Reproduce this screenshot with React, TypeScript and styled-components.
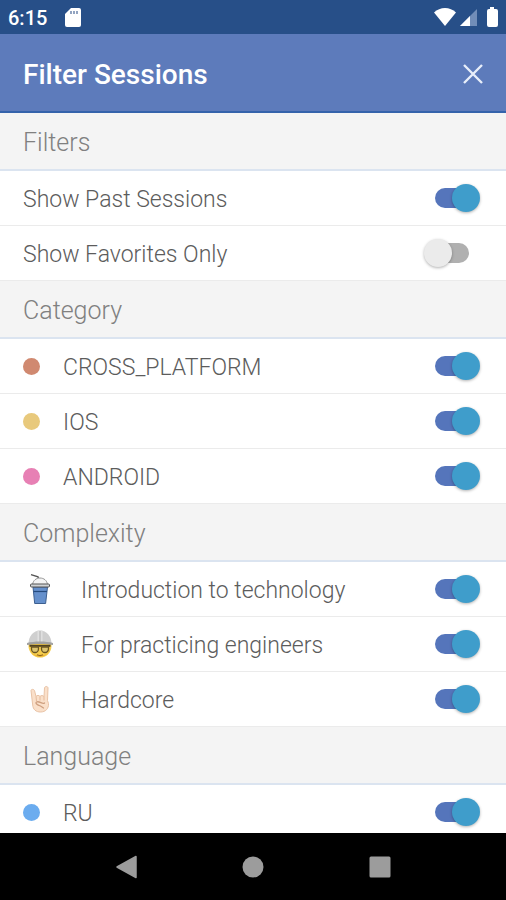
import React, { useState } from 'react';
import styled, { createGlobalStyle } from 'styled-components';

const GlobalStyle = createGlobalStyle`
  * { box-sizing: border-box; }
  html, body, #root { height: 100%; }
  body { margin: 0; background: #fff; font-family: Roboto, sans-serif; }
`;

const Screen = styled.div`
  display: flex;
  flex-direction: column;
  height: 100vh;
  overflow: hidden;
`;

const StatusBar = styled.div`
  display: flex;
  flex: none;
  align-items: center;
  justify-content: space-between;
  height: 34px;
  padding: 0 8px;
  background: #274f88;
  color: #fff;
`;

const StatusGroup = styled.div<{ $gap: number }>`
  display: flex;
  align-items: center;
  gap: ${({ $gap }) => $gap}px;
  svg { display: block; }
`;

const Clock = styled.time`
  font-size: 20px;
  font-weight: 500;
  line-height: 24px;
  padding-top: 2px;
`;

const TitleBar = styled.header`
  display: flex;
  flex: none;
  align-items: center;
  justify-content: space-between;
  height: 79px;
  padding: 2px 16px 0 23px;
  background: #5d7bbb;
  border-bottom: 2px solid #3563ab;
  color: #fff;
`;

const Title = styled.h1`
  margin: 0;
  padding-top: 2px;
  font-size: 28px;
  font-weight: 500;
  line-height: 32px;
`;

const CloseButton = styled.button`
  display: grid;
  place-items: center;
  width: 34px;
  height: 34px;
  padding: 0;
  border: 0;
  background: none;
  color: #e8eefa;
  cursor: pointer;
`;

const Content = styled.main`
  flex: 1;
  min-height: 0;
  overflow-y: auto;
  scrollbar-width: none;
`;

const SectionTitle = styled.h2`
  display: flex;
  align-items: center;
  height: 58px;
  margin: 0;
  padding: 4px 23px 0;
  background: #f4f4f4;
  border-bottom: 2px solid #dbe4f0;
  color: #808080;
  font-size: 25px;
  font-weight: 300;
  line-height: 32px;
`;

const List = styled.ul`
  margin: 0;
  padding: 0;
  list-style: none;
`;

const Row = styled.li`
  display: flex;
  height: 55px;
  border-bottom: 1px solid #ebebeb;
`;

const RowLabel = styled.label`
  display: flex;
  flex: 1;
  align-items: center;
  padding: 0 26px 0 23px;
  cursor: pointer;
`;

const RowText = styled.span`
  flex: 1;
  padding-top: 4px;
  color: #5c5c5c;
  font-size: 23px;
  font-weight: 300;
  line-height: 28px;
`;

const Dot = styled.span<{ $color: string }>`
  width: 17px;
  height: 17px;
  margin-right: 23px;
  border-radius: 50%;
  background: ${({ $color }) => $color};
`;

const Picture = styled.span`
  display: grid;
  place-items: center;
  width: 34px;
  margin-right: 24px;
`;

const Switch = styled.input`
  appearance: none;
  display: grid;
  align-items: center;
  width: 56px;
  height: 28px;
  margin: 0;
  cursor: pointer;

  &::before, &::after { content: ''; grid-area: 1 / 1; }
  &::before {
    justify-self: center;
    width: 34px;
    height: 20px;
    border-radius: 10px;
    background: #b0b0b0;
  }
  &::after {
    justify-self: start;
    width: 28px;
    height: 28px;
    border-radius: 50%;
    background: #ebebeb;
    box-shadow: 0 1px 3px rgba(0, 0, 0, 0.3);
  }
  &:checked::before { background: #5575bb; }
  &:checked::after { justify-self: end; background: #3f9dcb; }
`;

const NavBar = styled.nav`
  display: grid;
  flex: none;
  grid-template-columns: repeat(3, 25%);
  justify-content: center;
  height: 67px;
  background: #000;
`;

const NavButton = styled.button`
  display: grid;
  place-items: center;
  padding: 0;
  border: 0;
  background: none;
  color: #9c9c9c;
  cursor: pointer;
`;

const CupIcon = () => (
  <svg width="24" height="32" viewBox="0 0 24 32" fill="none" aria-hidden="true">
    <path d="M3 1.6l7 2.3 2.4 7" stroke="#555" strokeWidth="1.4" />
    <path d="M4.5 11.5c.6-4 3.6-6.5 7.500-6.500s7 2.500 7.500 6.500z" fill="#f4f4f4" stroke="#999" strokeWidth="1" />
    <path d="M5 14l1.700 16.500h10.900L19.500 14z" fill="#6590cc" stroke="#3c5f90" strokeWidth="1" />
    <path d="M5.500 18.500h13.500" stroke="#254b7d" strokeWidth="1.2" />
    <rect x="2.500" y="11" width="19" height="3" rx="1" fill="#cfd2d4" stroke="#555" strokeWidth="1" />
  </svg>
);

const EngineerIcon = () => (
  <svg width="26" height="30" viewBox="0 0 26 30" fill="none" aria-hidden="true">
    <circle cx="13" cy="17" r="11.500" fill="#f6cd4c" />
    <path d="M3 20c3 10 17 10 20 0-2 5-6 7-10 7s-8-2-10-7z" fill="#e5a92d" />
    <path d="M1.500 15C1.500 7 6.500 1.500 13 1.500S24.500 7 24.500 15z" fill="#cfcfcf" />
    <path d="M10.500 1.500h5V14h-5z" fill="#e0e0e0" />
    <path d="M13 2v12" stroke="#b0b0b0" strokeWidth="1" />
    <path d="M0 14c7-2 19-2 26 0v2c-7-1.500-19-1.500-26 0z" fill="#a2a2a2" />
    <path d="M2.500 16.800h21" stroke="#514322" strokeWidth="2" />
    <path d="M4.500 18h7v2a3.500 3.500 0 0 1-7 0zM14.500 18h7v2a3.500 3.500 0 0 1-7 0z" fill="#dcc46e" stroke="#6b5522" strokeWidth="1.300" />
    <path d="M10 25.800q3 1.500 6 0" stroke="#94651c" strokeWidth="1.200" />
  </svg>
);

const RockIcon = () => (
  <svg width="22" height="28" viewBox="0 0 22 28" fill="none" aria-hidden="true">
    <path
      d="M2 5.500c0-1.500 3-1.500 3.500 0l1.500 6c1-1.500 3-1.500 4 0 1-1.300 3-1.300 4 .2L15.500 3c.2-2 3.500-2 3.500 0l-.5 12.500 1 3c.5 5-3 8.500-8 8.500-4.500 0-7.500-2.500-7.800-7z"
      fill="#fae0ca"
      stroke="#e9c3a6"
      strokeWidth="1"
    />
    <path d="M7 11.500l.5 4.500M11 11.500v4M15 11.500v4" stroke="#e4bb9c" strokeWidth="1" />
    <path d="M15.500 18c-2 2-5-2.500-8-1-1.500 1 .5 3 4 4l3 2" stroke="#cfa080" strokeWidth="1.300" strokeLinecap="round" />
  </svg>
);

type Item = { label: string; on: boolean; color?: string; icon?: React.ReactNode };

const sections: { title: string; items: Item[] }[] = [
  {
    title: 'Filters',
    items: [
      { label: 'Show Past Sessions', on: true },
      { label: 'Show Favorites Only', on: false },
    ],
  },
  {
    title: 'Category',
    items: [
      { label: 'CROSS_PLATFORM', on: true, color: '#d08970' },
      { label: 'IOS', on: true, color: '#e8c97c' },
      { label: 'ANDROID', on: true, color: '#e780b4' },
    ],
  },
  {
    title: 'Complexity',
    items: [
      { label: 'Introduction to technology', on: true, icon: <CupIcon /> },
      { label: 'For practicing engineers', on: true, icon: <EngineerIcon /> },
      { label: 'Hardcore', on: true, icon: <RockIcon /> },
    ],
  },
  {
    title: 'Language',
    items: [{ label: 'RU', on: true, color: '#6bacef' }],
  },
];

function FilterRow({ item }: { item: Item }) {
  const [on, setOn] = useState(item.on);
  return (
    <Row>
      <RowLabel>
        {item.color && <Dot $color={item.color} />}
        {item.icon && <Picture>{item.icon}</Picture>}
        <RowText>{item.label}</RowText>
        <Switch type="checkbox" checked={on} onChange={(e) => setOn(e.target.checked)} />
      </RowLabel>
    </Row>
  );
}

export default function App() {
  return (
    <Screen>
      <GlobalStyle />
      <StatusBar>
        <StatusGroup $gap={18}>
          <Clock>6:15</Clock>
          <svg width="16" height="19" viewBox="0 0 16 19" aria-hidden="true">
            <path d="M6 0h8a2 2 0 0 1 2 2v15a2 2 0 0 1-2 2H2a2 2 0 0 1-2-2V6z" fill="#fff" />
            <path d="M6 3v3M9 3v3M12 3v3" stroke="#6f86ad" strokeWidth="1.500" />
          </svg>
        </StatusGroup>
        <StatusGroup $gap={4}>
          <svg width="22" height="18" viewBox="0 0 22 18" aria-hidden="true">
            <path d="M0 4.500C6-1.500 16-1.500 22 4.500L11 18z" fill="#fff" />
          </svg>
          <svg width="17" height="17" viewBox="0 0 17 17" aria-hidden="true">
            <path d="M17 0v17H0z" fill="#718db8" />
            <path d="M10 7v10H0z" fill="#fff" />
          </svg>
          <svg width="17" height="20" viewBox="0 0 17 20" aria-hidden="true">
            <path d="M9 0h4v2h2a2 2 0 0 1 2 2v14a2 2 0 0 1-2 2H8a2 2 0 0 1-2-2V4a2 2 0 0 1 2-2h1z" fill="#fff" />
          </svg>
        </StatusGroup>
      </StatusBar>
      <TitleBar>
        <Title>Filter Sessions</Title>
        <CloseButton type="button" aria-label="Close">
          <svg width="20" height="20" viewBox="0 0 20 20" aria-hidden="true">
            <path d="M1 1l18 18M19 1L1 19" stroke="currentColor" strokeWidth="2.400" />
          </svg>
        </CloseButton>
      </TitleBar>
      <Content>
        {sections.map((section) => (
          <section key={section.title}>
            <SectionTitle>{section.title}</SectionTitle>
            <List>
              {section.items.map((item) => (
                <FilterRow key={item.label} item={item} />
              ))}
            </List>
          </section>
        ))}
      </Content>
      <NavBar>
        <NavButton type="button" aria-label="Back">
          <svg width="22" height="24" viewBox="0 0 22 24" aria-hidden="true">
            <path d="M20 1.500v21L1 12z" fill="currentColor" stroke="currentColor" strokeWidth="1.500" strokeLinejoin="round" />
          </svg>
        </NavButton>
        <NavButton type="button" aria-label="Home">
          <svg width="22" height="22" viewBox="0 0 22 22" aria-hidden="true">
            <circle cx="11" cy="11" r="10.500" fill="currentColor" />
          </svg>
        </NavButton>
        <NavButton type="button" aria-label="Recent apps">
          <svg width="22" height="22" viewBox="0 0 22 22" aria-hidden="true">
            <rect x="0.500" y="0.500" width="21" height="21" rx="1.500" fill="currentColor" />
          </svg>
        </NavButton>
      </NavBar>
    </Screen>
  );
}
